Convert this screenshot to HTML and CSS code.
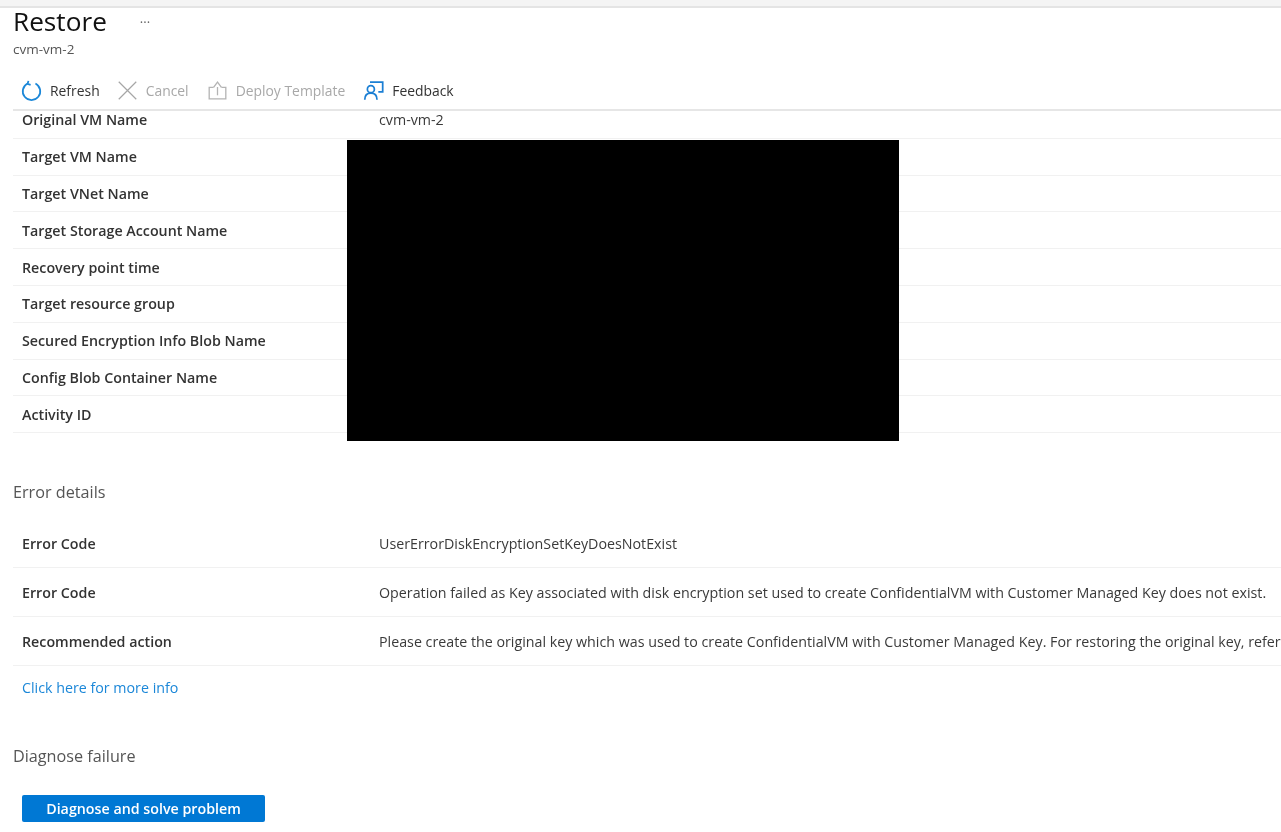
FILE: index.html
```html
<!DOCTYPE html>
<html lang="en">
<head>
<meta charset="utf-8">
<title>Restore</title>
<link rel="stylesheet" href="styles.css">
</head>
<body>
<div class="topstrip"></div>
<main class="page">
  <header class="head">
    <div class="title-line">
      <h1 class="title">Restore</h1>
      <span class="more">···</span>
    </div>
    <div class="subtitle">cvm-vm-2</div>
  </header>
  <nav class="toolbar">
    <button class="tool">
      <svg class="icon" viewBox="0 0 24 24" fill="none" stroke="#1b87d8" stroke-width="2"><path d="M7.500 4A10 10 0 1 0 16.500 4"/><path d="M8.500 1 7.500 4.500 11 5.500"/></svg>
      <span>Refresh</span>
    </button>
    <button class="tool off">
      <svg class="icon" viewBox="0 0 24 24" fill="none" stroke="#a6a6a6" stroke-width="1.400"><path d="M2 2 22 22M22 2 2 22"/></svg>
      <span>Cancel</span>
    </button>
    <button class="tool off">
      <svg class="icon" viewBox="0 0 24 24" fill="none" stroke="#b4b4b4" stroke-width="1.500"><path d="M7.500 8.500H2.500V21.500H21.500V8.500H16.500"/><path d="M7.500 8.500 12 2.500 16.500 8.500"/><path d="M12 8V17.500"/></svg>
      <span>Deploy Template</span>
    </button>
    <button class="tool">
      <svg class="icon" viewBox="0 0 24 24" fill="none" stroke="#1b7fd4" stroke-width="2"><path d="M8 2.500H22.500V13.500H17.500"/><circle cx="9" cy="10.500" r="4"/><path d="M2 22.500C2 17.500 5 15 9 15C13 15 16 17.500 16 22.500"/></svg>
      <span>Feedback</span>
    </button>
  </nav>
  <section class="rows first">
    <div class="row"><div class="key">Original VM Name</div><div class="val">cvm-vm-2</div></div>
    <div class="row"><div class="key">Target VM Name</div></div>
    <div class="row"><div class="key">Target VNet Name</div></div>
    <div class="row"><div class="key">Target Storage Account Name</div></div>
    <div class="row"><div class="key">Recovery point time</div></div>
    <div class="row"><div class="key">Target resource group</div></div>
    <div class="row"><div class="key">Secured Encryption Info Blob Name</div></div>
    <div class="row"><div class="key">Config Blob Container Name</div></div>
    <div class="row"><div class="key">Activity ID</div></div>
  </section>
  <h2 class="section-title errors">Error details</h2>
  <section class="rows second">
    <div class="row wide"><div class="key">Error Code</div><div class="val">UserErrorDiskEncryptionSetKeyDoesNotExist</div></div>
    <div class="row wide"><div class="key">Error Code</div><div class="val">Operation failed as Key associated with disk encryption set used to create ConfidentialVM with Customer Managed Key does not exist.</div></div>
    <div class="row wide"><div class="key">Recommended action</div><div class="val">Please create the original key which was used to create ConfidentialVM with Customer Managed Key. For restoring the original key, refer</div></div>
  </section>
  <a class="link" href="#">Click here for more info</a>
  <h2 class="section-title diagnose">Diagnose failure</h2>
  <button class="primary">Diagnose and solve problem</button>
</main>
<div class="redaction"></div>
</body>
</html>
```
FILE: styles.css
```css
* { box-sizing: border-box; }
html, body { margin: 0; height: 832px; overflow: hidden; background: #fff; }
body { font-family: "Open Sans", "Noto Sans", sans-serif; color: #2b2b2b; position: relative; }
.topstrip { height: 8px; background: #f4f4f4; border-bottom: 2px solid #e4e4e4; }
.page { padding: 0 0 0 13px; filter: blur(0.45px); }
.head { height: 52px; }
.title-line { display: flex; align-items: center; height: 28px; margin-top: -1px; }
.title { margin: 0; font-size: 26.200px; font-weight: 400; color: #111; line-height: 28px; }
.more { margin-left: 33px; font-size: 13px; color: #666; line-height: 14px; margin-top: 2px; }
.subtitle { font-size: 13.500px; line-height: 16px; margin-top: 6px; color: #555; }
.toolbar { display: flex; align-items: center; height: 52px; padding-top: 12px; border-bottom: 2px solid #e6e6e6; padding-left: 8px; }
.tool { display: flex; align-items: center; gap: 8px; background: none; border: 0; padding: 0; margin-right: 18px; font: inherit; font-size: 13.900px; color: #333; }
.tool:first-child { margin-right: 17px; }
.tool.off { color: #a8a8a8; }
.icon { width: 21px; height: 21px; flex: none; }
.rows { font-size: 14.250px; }
.row { display: flex; align-items: center; height: 36.800px; border-bottom: 1px solid #f1f1f1; }
.rows.first { margin-top: -9px; }
.key { width: 366px; padding-left: 9px; font-weight: 600; color: #333; flex: none; white-space: nowrap; }
.val { white-space: nowrap; color: #3a3a3a; }
.row.wide { height: 49px; }
.section-title { margin: 0; font-size: 16.200px; font-weight: 400; color: #555; line-height: 20px; }
.errors { margin-top: 49px; }
.second { margin-top: 17px; }
.link { display: block; margin-top: 13px; padding-left: 9px; font-size: 14.250px; line-height: 18px; color: #1b87d8; text-decoration: none; }
.diagnose { margin-top: 49px; }
.primary { display: block; margin: 29px 0 0 9px; width: 243px; height: 27px; background: #0078d4; color: #fff; border: 0; border-radius: 2px; font: inherit; font-size: 14.250px; font-weight: 600; }
.redaction { position: absolute; left: 347px; top: 140px; width: 552px; height: 301px; background: #000; }
```
